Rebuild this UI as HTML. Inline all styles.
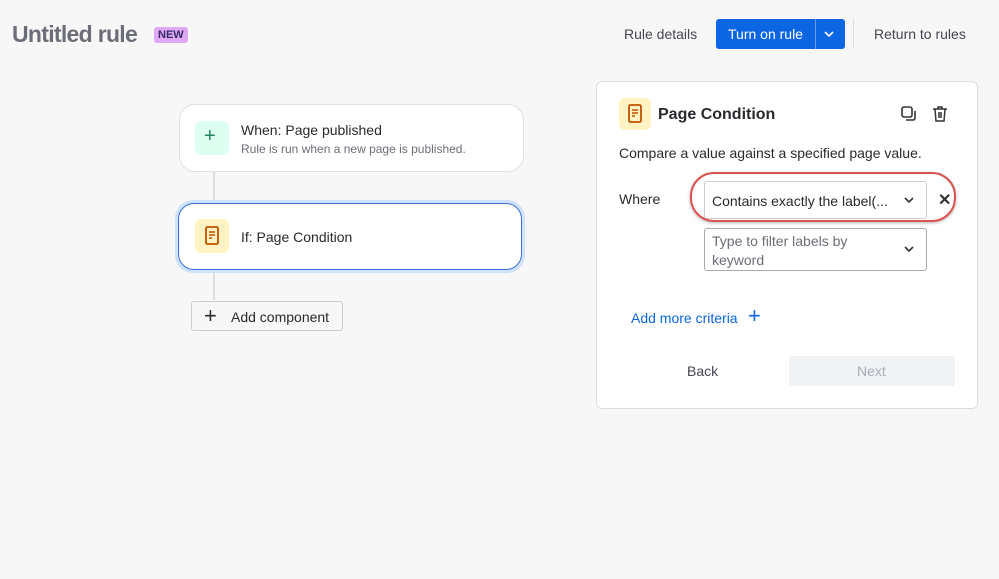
<!DOCTYPE html>
<html><head><style>
body{margin:0;width:999px;height:579px;background:#f7f7f7;font-family:"Liberation Sans",sans-serif;position:relative;overflow:hidden;color:#292a2e}
.a{position:absolute}
.icon{width:34px;height:34px;border-radius:6px;position:absolute}
</style></head><body>
<div class="a" style="left:12px;top:21px;font-size:23px;font-weight:bold;color:#6b6e76;letter-spacing:-0.7px">Untitled rule</div>
<div class="a" style="left:154px;top:27px;background:#dfa8f5;border-radius:3px;font-size:11px;font-weight:bold;color:#352c63;padding:2px 4px;line-height:12px">NEW</div>
<div class="a" style="left:624px;top:26px;font-size:14px;color:#44474f">Rule details</div>
<div class="a" style="left:716px;top:19px;width:129px;height:30px;background:#0c66e4;border-radius:3px"></div>
<div class="a" style="left:728px;top:26px;font-size:14px;color:#fff">Turn on rule</div>
<div class="a" style="left:815px;top:19px;width:1px;height:30px;background:#6a9ef0"></div>
<svg class="a" style="left:823px;top:29px" width="12" height="10"><path d="M2 3l4 4 4-4" stroke="#fff" stroke-width="1.6" fill="none"/></svg>
<div class="a" style="left:853px;top:19px;width:1px;height:30px;background:#ddd"></div>
<div class="a" style="left:874px;top:26px;font-size:14px;color:#44474f">Return to rules</div>

<div class="a" style="left:213px;top:170px;width:2px;height:130px;background:#ddd"></div>
<div class="a" style="left:179px;top:104px;width:343px;height:66px;background:#fff;border:1px solid #e0e0e0;border-radius:16px"></div>
<div class="icon" style="left:195px;top:121px;background:#dcfff1"></div>
<div class="a" style="left:204px;top:126px;font-size:20px;color:#1f845a;line-height:20px">+</div>
<div class="a" style="left:241px;top:122px;font-size:14px">When: Page published</div>
<div class="a" style="left:241px;top:142px;font-size:12px;color:#6b6e76">Rule is run when a new page is published.</div>
<div class="a" style="left:175px;top:200px;width:350px;height:73px;border-radius:18px;background:#cfe1fd"></div>
<div class="a" style="left:178px;top:203px;width:344px;height:67px;background:#fff;border:1.5px solid #3a70d6;border-radius:16px;box-sizing:border-box"></div>
<div class="icon" style="left:195px;top:219px;background:#fff3c4"></div>
<svg class="a" style="left:204px;top:226px" width="16" height="20"><rect x="2" y="1" width="12" height="17" rx="1.5" stroke="#c25100" stroke-width="1.8" fill="none"/><path d="M5 6h6M5 9h6M5 12h3" stroke="#c25100" stroke-width="1.5"/></svg>
<div class="a" style="left:241px;top:229px;font-size:14px">If: Page Condition</div>
<div class="a" style="left:191px;top:301px;width:152px;height:30px;background:#f7f7f7;border:1px solid #ccc;border-radius:3px;box-sizing:border-box"></div>
<div class="a" style="left:204px;top:305px;font-size:22px;line-height:22px;font-weight:300">+</div>
<div class="a" style="left:231px;top:309px;font-size:14px">Add component</div>

<div class="a" style="left:596px;top:81px;width:382px;height:328px;background:#fff;border:1px solid #ddd;border-radius:6px;box-sizing:border-box"></div>
<div class="icon" style="left:619px;top:98px;width:32px;height:32px;background:#fff3c4"></div>
<svg class="a" style="left:627px;top:104px" width="16" height="20"><rect x="2" y="1" width="12" height="17" rx="1.5" stroke="#c25100" stroke-width="1.8" fill="none"/><path d="M5 6h6M5 9h6M5 12h3" stroke="#c25100" stroke-width="1.5"/></svg>
<div class="a" style="left:658px;top:106px;font-size:16px;font-weight:bold">Page Condition</div>
<svg class="a" style="left:900px;top:105px" width="18" height="18"><rect x="2" y="2" width="10" height="10" rx="2" stroke="#333" stroke-width="1.6" fill="none"/><path d="M15 6v7a2 2 0 0 1-2 2H6" stroke="#333" stroke-width="1.6" fill="none"/></svg>
<svg class="a" style="left:931px;top:105px" width="18" height="18"><path d="M2 4h14M7 4V2h4v2M4 4l1 12h8l1-12M8 7v6M10 7v6" stroke="#333" stroke-width="1.5" fill="none"/></svg>
<div class="a" style="left:619px;top:145px;font-size:14px">Compare a value against a specified page value.</div>
<div class="a" style="left:619px;top:191px;font-size:14px">Where</div>
<div class="a" style="left:690px;top:172px;width:266px;height:50px;border:2.5px solid #d9534f;border-radius:24px;box-sizing:border-box;box-shadow:0 1px 3px rgba(0,0,0,.3)"></div>
<div class="a" style="left:704px;top:181px;width:223px;height:38px;border:1px solid #ccc;border-radius:3px;box-sizing:border-box;background:#fff"></div>
<div class="a" style="left:712px;top:193px;font-size:14px">Contains exactly the label(...</div>
<svg class="a" style="left:903px;top:195px" width="12" height="10"><path d="M2 3l4 4 4-4" stroke="#333" stroke-width="1.6" fill="none"/></svg>
<div class="a" style="left:938px;top:190px;font-size:16px;font-weight:bold;color:#333">✕</div>
<div class="a" style="left:704px;top:228px;width:223px;height:43px;border:1px solid #aaa;border-radius:3px;box-sizing:border-box;background:#fff"></div>
<div class="a" style="left:712px;top:232px;font-size:14px;color:#6b6e76;line-height:19px;width:160px">Type to filter labels by keyword</div>
<svg class="a" style="left:903px;top:244px" width="12" height="10"><path d="M2 3l4 4 4-4" stroke="#333" stroke-width="1.6" fill="none"/></svg>
<div class="a" style="left:631px;top:310px;font-size:14px;color:#0c66e4">Add more criteria</div>
<div class="a" style="left:748px;top:305px;font-size:22px;color:#0c66e4;line-height:22px">+</div>
<div class="a" style="left:687px;top:363px;font-size:14px;color:#44474f">Back</div>
<div class="a" style="left:789px;top:356px;width:166px;height:30px;background:#f1f2f4;border-radius:3px"></div>
<div class="a" style="left:857px;top:363px;font-size:14px;color:#a5adba">Next</div>
</body></html>
